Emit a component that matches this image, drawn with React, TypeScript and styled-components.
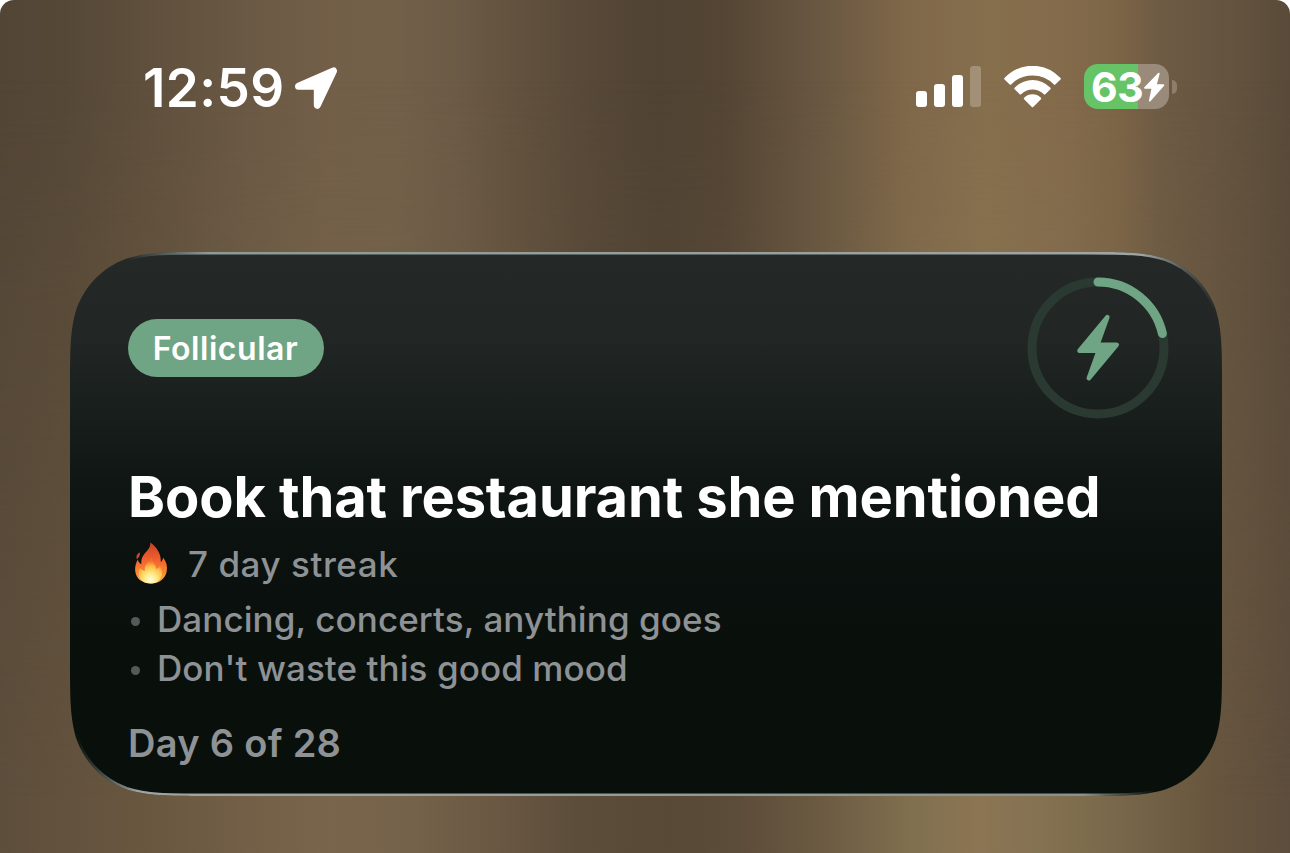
import React from "react";
import styled, { createGlobalStyle } from "styled-components";

const GlobalStyle = createGlobalStyle`
  html, body { margin: 0; padding: 0; background: #fff; }
  * { box-sizing: border-box; }
`;

const CARD_W = 1152;
const CARD_H = 544;

/* Continuous-curvature rounded rectangle, r is the nominal corner radius. */
function smoothRect(w: number, h: number, r: number) {
  const a = 1.52866 * r, b = 1.08849 * r, c = 0.86841 * r, d = 0.63149 * r;
  const e = 0.07491 * r, f = 0.37282 * r, g = 0.16906 * r;
  return [
    `M${a} 0L${w - a} 0`,
    `C${w - b} 0 ${w - c} 0 ${w - d} ${e}`,
    `C${w - f} ${g} ${w - g} ${f} ${w - e} ${d}`,
    `C${w} ${c} ${w} ${b} ${w} ${a}`,
    `L${w} ${h - a}`,
    `C${w} ${h - b} ${w} ${h - c} ${w - e} ${h - d}`,
    `C${w - g} ${h - f} ${w - f} ${h - g} ${w - d} ${h - e}`,
    `C${w - c} ${h} ${w - b} ${h} ${w - a} ${h}`,
    `L${a} ${h}`,
    `C${b} ${h} ${c} ${h} ${d} ${h - e}`,
    `C${f} ${h - g} ${g} ${h - f} ${e} ${h - d}`,
    `C0 ${h - c} 0 ${h - b} 0 ${h - a}`,
    `L0 ${a}`,
    `C0 ${b} 0 ${c} ${e} ${d}`,
    `C${g} ${f} ${f} ${g} ${d} ${e}`,
    `C${c} 0 ${b} 0 ${a} 0Z`,
  ].join("");
}

const Screen = styled.main`
  position: relative;
  isolation: isolate;
  width: 1290px;
  height: 853px;
  overflow: hidden;
  border-radius: 14px 14px 0 0;
  font-family: Inter, "Liberation Sans", sans-serif;
  color: #fff;
  background: linear-gradient(
    90deg,
    #534535 0px, #564837 66px, #61513e 165px, #6a5944 247px, #735f48 329px, #726049 395px,
    #6b5a45 461px, #60503d 527px, #554636 610px, #504333 658px, #544534 724px, #665540 806px,
    #7f6749 905px, #866f4d 987px, #836a4b 1070px, #7c6447 1119px, #6e5b44 1160px,
    #63533f 1234px, #594a39 1290px
  );

  &::before {
    content: "";
    position: absolute;
    inset: 0;
    z-index: -1;
    background: linear-gradient(
      90deg,
      #5d4e3c 0px, #69573f 148px, #735f47 247px, #78654b 329px, #75624a 411px, #6a5843 494px,
      #5c4d3b 576px, #574936 666px, #5c4c3a 740px, #6c5b42 823px, #80704f 913px, #8b7553 979px,
      #857252 1037px, #78674a 1119px, #69573f 1201px, #5d4d3c 1290px
    );
    mask-image: linear-gradient(180deg, transparent 80px, #000 800px);
  }
`;

const StatusBar = styled.header`
  height: 252px;
  padding: 64px 113px 0 143px;
  display: flex;
  justify-content: space-between;
  align-items: flex-start;
`;

const StatusGroup = styled.div<{ $gap: number }>`
  display: flex;
  align-items: center;
  gap: ${(p) => p.$gap}px;
  height: 46px;
`;

const Clock = styled.time`
  width: 152px;
  font-size: 53px;
  line-height: 46px;
  font-weight: 600;
  letter-spacing: 0.4px;
  padding-top: 2px;
`;

const Battery = styled.div`
  display: flex;
  align-items: center;
  gap: 3px;
  margin-top: -1px;
`;

const BatteryBody = styled.div<{ $level: number }>`
  width: 85px;
  height: 45px;
  border-radius: 14px;
  padding-left: 7px;
  display: flex;
  align-items: center;
  background: linear-gradient(90deg, #66c466 ${(p) => p.$level}%, #998a7a ${(p) => p.$level}%);
`;

const BatteryValue = styled.span`
  font-size: 41px;
  line-height: 45px;
  font-weight: 700;
  letter-spacing: -0.3px;
  padding-top: 1px;
  width: 52px;
`;

const BatteryNub = styled.div`
  width: 5px;
  height: 14px;
  border-radius: 0 7px 7px 0;
  background: #8f7d69;
`;

const Card = styled.section`
  position: relative;
  width: ${CARD_W}px;
  height: ${CARD_H}px;
  margin-left: 70px;
  padding: 25px 53px 0 58px;
  clip-path: path("${smoothRect(CARD_W, CARD_H, 89)}");
  background: linear-gradient(180deg, #242927 0%, #222725 15%, #181e1b 30%, #101613 42%, #0b110e 56%, #09100c 75%, #09100c 100%);
`;

const CardEdge = styled.svg`
  position: absolute;
  left: 0;
  top: 0;
`;

const CardHead = styled.div`
  display: flex;
  justify-content: space-between;
  align-items: center;
  height: 142px;
`;

const Pill = styled.span`
  width: 196px;
  height: 58px;
  border-radius: 29px;
  padding-right: 1px;
  background: #6fa584;
  display: flex;
  align-items: center;
  justify-content: center;
  font-size: 32px;
  font-weight: 600;
  letter-spacing: 0.55px;
`;

const Title = styled.h1`
  margin: 43px 0 0;
  font-size: 56px;
  line-height: 70px;
  font-weight: 700;
  letter-spacing: -0.12px;
  white-space: nowrap;
`;

const Streak = styled.p`
  margin: 8px 0 0;
  display: flex;
  align-items: center;
  gap: 20px;
  padding-left: 6px;
  height: 46px;
  font-size: 35px;
  font-weight: 500;
  letter-spacing: 0.55px;
  color: #8f9295;
`;

const StreakText = styled.span`
  padding-top: 2px;
`;

const TipList = styled.ul`
  list-style: none;
  margin: 8px 0 0;
  padding: 0;
`;

const Tip = styled.li`
  display: flex;
  align-items: center;
  gap: 17px;
  padding-left: 3px;
  height: 49px;
  font-size: 35px;
  font-weight: 450;
  letter-spacing: 0.08px;
  color: #8f9295;
  white-space: nowrap;
`;

const Dot = styled.span`
  width: 9px;
  height: 9px;
  margin-top: 5px;
  border-radius: 50%;
  background: #55595a;
`;

const DayCount = styled.p`
  margin: 26px 0 0;
  font-size: 38px;
  line-height: 50px;
  font-weight: 600;
  letter-spacing: 0.3px;
  color: #8f9295;
`;

const LocationArrow = () => (
  <svg width="44" height="44" viewBox="0 0 44 44">
    <path d="M38.5 6 22.3 40.3V21.3H3.500Z" fill="#fff" stroke="#fff" strokeWidth="7" strokeLinejoin="round" />
  </svg>
);

const Signal = () => (
  <svg width="66" height="42" viewBox="0 0 66 42" fill="#fff">
    <rect x="0" y="25" width="11" height="16" rx="3" />
    <rect x="18" y="18" width="11" height="23" rx="3" />
    <rect x="36" y="9" width="11" height="32" rx="3" />
    <rect x="54" y="0" width="11" height="41" rx="3" opacity="0.24" />
  </svg>
);

const Wifi = () => (
  <svg width="58" height="43" viewBox="0 0 58 43" fill="#fff" stroke="#fff" strokeWidth="2" strokeLinejoin="round">
    <path d="M1.200 12.700C16.600-3.200 40.400-3.200 55.800 12.700L50.600 17.700C38.700 5.300 18.300 5.300 6.400 17.700Z" />
    <path d="M11.300 22.500C21.200 12.400 35.800 12.400 45.700 22.500L40.600 27.600C34.100 20.700 22.900 20.700 16.400 27.600Z" />
    <path d="M20.800 32.500C25.100 28.300 31.900 28.300 36.200 32.500L28.500 40.200Z" />
  </svg>
);

const ChargeBolt = () => (
  <svg width="22" height="32" viewBox="0 0 22 32">
    <path d="M15.800 2.600 2 16.800H9.600L6.800 29.600 20.400 14.200H12.700Z" fill="#fff" stroke="#fff" strokeWidth="1.800" strokeLinejoin="round" />
  </svg>
);

const CycleRing = ({ day, total }: { day: number; total: number }) => {
  const r = 66;
  const length = 2 * Math.PI * r;
  return (
    <svg width="142" height="142" viewBox="0 0 142 142" fill="none">
      <circle cx="71" cy="71" r={r} stroke="#2a3a33" strokeWidth="9" />
      <circle
        cx="71" cy="71" r={r} stroke="#6fa584" strokeWidth="9" strokeLinecap="round"
        strokeDasharray={`${(length * day) / total} ${length}`} transform="rotate(-90 71 71)"
      />
      <path
        d="M80.300 40.200 52.500 73.800H71.700L61.800 101.200 89.700 67.700H70.400Z"
        fill="#6fa584" stroke="#6fa584" strokeWidth="4.600" strokeLinejoin="round"
      />
    </svg>
  );
};

const Flame = () => (
  <svg width="34" height="42" viewBox="0 0 34 42">
    <defs>
      <linearGradient id="flameOuter" x1="0" y1="0" x2="0" y2="1">
        <stop offset="0" stopColor="#c8402a" />
        <stop offset="0.4" stopColor="#ef5f2c" />
        <stop offset="0.75" stopColor="#f98a34" />
        <stop offset="1" stopColor="#fbb04a" />
      </linearGradient>
      <radialGradient id="flameInner" cx="0.5" cy="0.88" r="0.75">
        <stop offset="0" stopColor="#fffde0" />
        <stop offset="0.35" stopColor="#ffec86" />
        <stop offset="0.75" stopColor="#fdb945" />
        <stop offset="1" stopColor="#f88a34" stopOpacity="0.3" />
      </radialGradient>
    </defs>
    <path d="M16.200 .5C22 4.500 27.300 11 26.800 20 28 19 28.800 17.500 29.200 15.500 32.600 20 33.600 24.500 32.700 29.500 31.200 37 25 41.500 17 41.500 8.500 41.500 2 36.800 1.200 29C.8 24.500 2 20.500 3.800 17.500 4.600 20 5.600 21.500 7.400 22 6.800 17 8.800 13.500 12 10 14.800 7 16.700 4.500 16.200 .5Z" fill="url(#flameOuter)" />
    <path d="M5.600 10.200C6.600 13 5.200 15.200 2.800 17.300 1.800 14.300 2.800 12 5.600 10.200Z" fill="#c9482b" />
    <path d="M17.800 15.500C17.500 20 22.300 21.500 22 27 23.700 26.500 25 25.600 26 24 29.300 29 28.500 34 26 37.200 23.800 40 20.500 41.500 17 41.500 9.500 41.500 4.500 37 4.600 31 4.600 28.800 5.200 27.500 6.200 26 7.600 28 9 28.600 11 28.800 9.800 23 13.500 20.500 17.800 15.500Z" fill="url(#flameInner)" />
  </svg>
);

const tips = ["Dancing, concerts, anything goes", "Don't waste this good mood"];

export default function App() {
  return (
    <>
      <GlobalStyle />
      <Screen>
        <StatusBar>
          <StatusGroup $gap={0}>
            <Clock>12:59</Clock>
            <LocationArrow />
          </StatusGroup>
          <StatusGroup $gap={22}>
            <Signal />
            <Wifi />
            <Battery>
              <BatteryBody $level={63.5}>
                <BatteryValue>63</BatteryValue>
                <ChargeBolt />
              </BatteryBody>
              <BatteryNub />
            </Battery>
          </StatusGroup>
        </StatusBar>
        <Card>
          <CardEdge width={CARD_W} height={CARD_H} viewBox={`0 0 ${CARD_W} ${CARD_H}`} fill="none">
            <defs>
              <linearGradient id="edge" gradientUnits="userSpaceOnUse" x1="0" y1="0" x2={CARD_W} y2="0">
                <stop offset="0.05" stopColor="#8d9a96" stopOpacity="0" />
                <stop offset="0.12" stopColor="#8d9a96" />
                <stop offset="0.93" stopColor="#a0a5a2" />
                <stop offset="0.995" stopColor="#8d9a96" stopOpacity="0" />
              </linearGradient>
              <linearGradient id="edgeLow" gradientUnits="userSpaceOnUse" x1="0" y1="0" x2={CARD_W} y2="0">
                <stop offset="0.005" stopColor="#8d9a96" stopOpacity="0" />
                <stop offset="0.06" stopColor="#a0a5a2" />
                <stop offset="0.88" stopColor="#87928f" />
                <stop offset="0.94" stopColor="#87928f" stopOpacity="0" />
              </linearGradient>
              <clipPath id="upper"><rect width={CARD_W} height="80" /></clipPath>
              <clipPath id="lower"><rect y={CARD_H - 80} width={CARD_W} height="80" /></clipPath>
            </defs>
            <path d={smoothRect(CARD_W, CARD_H, 89)} stroke="url(#edge)" strokeWidth="5" clipPath="url(#upper)" />
            <path d={smoothRect(CARD_W, CARD_H, 89)} stroke="url(#edgeLow)" strokeWidth="5" clipPath="url(#lower)" />
          </CardEdge>
          <CardHead>
            <Pill>Follicular</Pill>
            <CycleRing day={6} total={28} />
          </CardHead>
          <Title>Book that restaurant she mentioned</Title>
          <Streak>
            <Flame />
            <StreakText>7 day streak</StreakText>
          </Streak>
          <TipList>
            {tips.map((tip) => (
              <Tip key={tip}>
                <Dot />
                {tip}
              </Tip>
            ))}
          </TipList>
          <DayCount>Day 6 of 28</DayCount>
        </Card>
      </Screen>
    </>
  );
}
